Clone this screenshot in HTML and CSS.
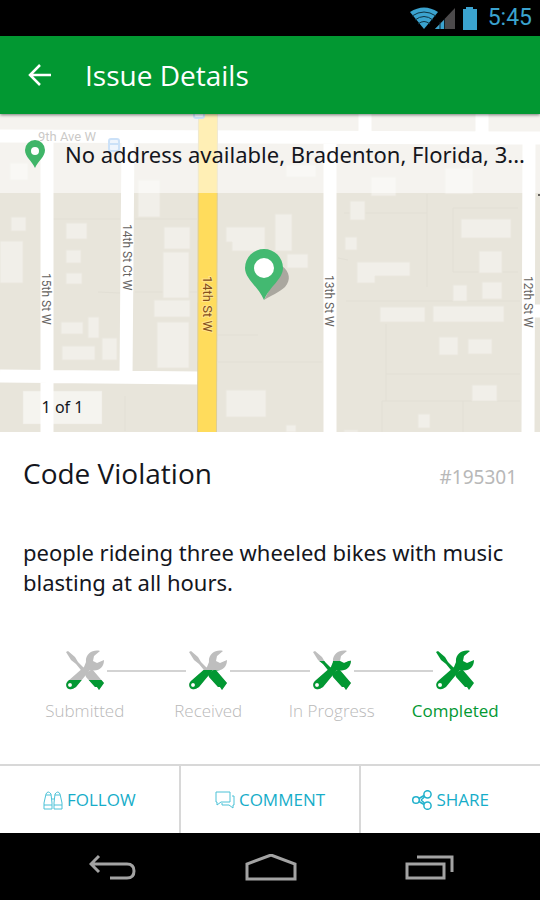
FILE: index.html
```
<!DOCTYPE html>
<html lang="en">
<head>
<meta charset="utf-8">
<meta name="viewport" content="width=device-width, initial-scale=1">
<title>Issue Details</title>
<link rel="stylesheet" href="styles.css">
</head>
<body>
<svg class="defs" width="0" height="0" aria-hidden="true">
  <defs>
    <g id="tools">
      <path d="M1 2 3 1 10 7 13 12 23 22 20 25 11 14 6 10Z"/>
      <path d="M20 24 27 19 39 33 34 40 32 37 30 37 21 27Z"/>
      <path d="M39 10 32 13 28 11 29 6 35 1C28-1 20 4 21 12L19 17 3 31C0 34 1 38 4 39 7 40 9 38 11 37L25 20C34 22 39 17 39 10ZM7 35A2 2 0 1 1 3 35 2 2 0 0 1 7 35Z" fill-rule="evenodd"/>
    </g>
    <clipPath id="fill-1"><rect y="30" width="40" height="11"/></clipPath>
    <clipPath id="fill-2"><rect y="20" width="40" height="21"/></clipPath>
    <clipPath id="fill-3"><rect y="11" width="40" height="30"/></clipPath>
  </defs>
</svg>
<div class="screen">
  <div class="status">
    <svg class="wifi" width="30" height="22" viewBox="0 0 30 22" aria-hidden="true">
      <path d="M1 5Q15-4 29 5L15 22Z" fill="#3ba3cf"/>
      <path d="M3 9Q15 1 27 9M6 13Q15 6 24 13M9 17Q15 12 21 17" fill="none" stroke="#0f3342" stroke-width="1"/>
    </svg>
    <svg class="signal" width="20" height="22" viewBox="0 0 20 22" aria-hidden="true">
      <path d="M0 22 20 1V22Z" fill="#4c4a4b"/>
      <path d="M0 22 9 13V22Z" fill="#3ba3cf"/>
      <path d="M5 15V22M9.500 12V22" stroke="#10252e"/>
    </svg>
    <svg class="battery" width="16" height="23" viewBox="0 0 16 23" aria-hidden="true">
      <path d="M1 2H4V0H11V2H15V23H1Z" fill="#3ba3cf"/>
    </svg>
    <span class="clock">5:45</span>
  </div>

  <header class="appbar">
    <button class="back" type="button" aria-label="Back">
      <svg width="24" height="24" viewBox="0 0 24 24"><path d="M23 12H2M12 2 2 12 12 22" fill="none" stroke="#fff" stroke-width="2.500"/></svg>
    </button>
    <h1>Issue Details</h1>
  </header>

  <section class="map" aria-label="Map">
    <svg class="tiles" viewBox="0 114 540 318" preserveAspectRatio="xMidYMid slice">
      <rect y="114" width="540" height="318" fill="#e8e5db"/>
      <g fill="none" stroke="#e2dfd5">
        <path d="M53 219H120M98 292 120 293M135 219H197M135 292H197M218 335H258M218 362H322M125 396V431M427 194V287M453 208H518M453 208V272M453 272H518M344 213H427M338 258 348 260M346 301H520M386 324V401M386 374H520M382 401H520M382 401V432M463 401V432"/>
      </g>
      <g fill="#f1efe9" stroke="#eae7de">
        <path d="M11 217H26V231H11ZM0 241H23V283H0ZM66 223H87V239H66ZM66 250H81V263H66ZM66 273H82V284H66ZM61 322H83V334H61ZM88 317H99V338H88ZM62 346H95V360H62ZM102 338H117V360H102Z"/>
        <path d="M138 180H160V217H138ZM164 227H190V249H164ZM163 252H189V298H163ZM154 300H190V317H154ZM157 322H189V368H157ZM23 391H102V424H23Z"/>
        <path d="M226 227H265V251H232V242H226ZM226 390H266V417H226ZM275 214H292V251H275ZM287 254H308V268H287ZM286 165H316V177H286ZM10 163H28V180H10Z"/>
        <path d="M350 201H365V220H350ZM345 237H357V250H345ZM357 262H410V276H375V283H357ZM461 219H511V238H461ZM479 251H502V273H479ZM482 282H502V299H482ZM453 285H467V301H453ZM380 307H425V322H380ZM433 306H504V322H433ZM439 337H458V355H439ZM468 339H492V354H468ZM472 385H497V401H472ZM418 414H430V428H418ZM286 425H296V432H286ZM371 177H396V196H371ZM445 168H473V194H445ZM344 430H358V432H344Z"/>
      </g>
      <path d="M0 136 540 138M365 114V136M482 114V136M47 135V432M128 140 126 378M0 376 200 378M330 138V432M529 138 528 432M528 311H540" fill="none" stroke="#fff" stroke-width="13"/>
      <path d="M208 114 207 432" stroke="#dccd97" stroke-width="20"/>
      <path d="M208 114 207 432" stroke="#ffdc5c" stroke-width="18"/>
      <path d="M538 195H540" stroke="#66635f" stroke-width="2"/>
      <g fill="#dbe9fb" stroke="#8dbcf0" stroke-width="2"><rect x="194" y="106" width="10" height="12" rx="2"/><rect x="109" y="139" width="10" height="12" rx="2"/><path d="M110 144H118"/></g>
      <text x="38" y="141" class="ave">9th Ave W</text>
      <g class="street">
        <text transform="translate(42 273) rotate(90)">15th St W</text>
        <text transform="translate(123 224) rotate(90)">14th St Ct W</text>
        <text class="main" transform="translate(203 276) rotate(90)">14th St W</text>
        <text transform="translate(325 275) rotate(90)">13th St W</text>
        <text transform="translate(524 276) rotate(90)">12th St W</text>
      </g>
      <path d="M264 300C270 296 280 292 285 287 291 280 290 272 282 266Z" fill="#aaa79f"/>
      <path d="M264 300C258 286 245 279 245 268A19 19 0 0 1 283 268C283 279 270 286 264 300Z" fill="#43b971"/>
      <circle cx="264" cy="268" r="10" fill="#fff"/>
    </svg>
    <div class="address">
      <svg width="22" height="28" viewBox="0 0 22 28" aria-hidden="true"><path d="M11 28C8 21 1 17 1 10A10 10 0 0 1 21 10C21 17 14 21 11 28Z" fill="#3fb568"/><circle cx="11" cy="11" r="4" fill="#fff"/></svg>
      <span>No address available, Bradenton, Florida, 3...</span>
    </div>
    <span class="count">1 of 1</span>
  </section>

  <main class="issue">
    <div class="heading">
      <h2>Code Violation</h2>
      <span class="number">#195301</span>
    </div>
    <p>people rideing three wheeled bikes with music blasting at all hours.</p>
    <ol class="steps">
      <li><div class="mark"><svg width="40" height="41" viewBox="0 0 40 41"><use href="#tools" class="off"/><use href="#tools" class="on" clip-path="url(#fill-1)"/></svg></div>Submitted</li>
      <li><div class="mark"><svg width="40" height="41" viewBox="0 0 40 41"><use href="#tools" class="off"/><use href="#tools" class="on" clip-path="url(#fill-2)"/></svg></div>Received</li>
      <li><div class="mark"><svg width="40" height="41" viewBox="0 0 40 41"><use href="#tools" class="off"/><use href="#tools" class="on" clip-path="url(#fill-3)"/></svg></div>In Progress</li>
      <li class="current"><div class="mark"><svg width="40" height="41" viewBox="0 0 40 41"><use href="#tools" class="on"/></svg></div>Completed</li>
    </ol>
  </main>

  <div class="actions">
    <button type="button"><svg width="20" height="20" viewBox="0 0 20 20"><path d="M1 19V13L3 4Q5 0 8 4L9 13V19ZM11 19V13L12 4Q15 0 17 4L19 13V19ZM1 15H9M11 15H19M3 5H8M12 5H17M9 9H11"/></svg>FOLLOW</button>
    <button type="button"><svg width="20" height="20" viewBox="0 0 20 20"><path d="M1 2H15V12H6L2 15V12H1ZM17 6H19V15H18V18L14 15H7V13"/></svg>COMMENT</button>
    <button type="button"><svg class="share" width="20" height="20" viewBox="0 0 20 20"><circle cx="4" cy="10" r="3.300"/><circle cx="15.500" cy="4.300" r="3.600"/><circle cx="15.500" cy="15.700" r="3.600"/><path d="M7 8.500 12 5.500M7 11.500 12 14.500M9 10 12.500 13M9 10 12.500 7"/></svg>SHARE</button>
  </div>

  <nav class="system">
    <button type="button" aria-label="Back"><svg width="48" height="28" viewBox="0 0 48 28"><path d="M10 2 2 10 10 18M2 10H38Q45 10 45 17T38 24H21"/></svg></button>
    <button type="button" aria-label="Home"><svg width="52" height="28" viewBox="0 0 52 28"><path d="M2 25V10L26 1 50 10V25Z"/></svg></button>
    <button type="button" aria-label="Recent apps"><svg width="50" height="28" viewBox="0 0 50 28"><path d="M2 10H39V24H2ZM12 3H47V18"/></svg></button>
  </nav>
</div>
</body>
</html>
```
FILE: styles.css
```
* {
  box-sizing: border-box;
}

body {
  margin: 0;
  background: #fff;
  color: #14161d;
  font-family: "Open Sans", "Noto Sans", sans-serif;
}

h1, h2, p, ol {
  margin: 0;
  padding: 0;
  font-weight: 400;
}

button {
  padding: 0;
  border: 0;
  background: none;
  font: inherit;
  cursor: pointer;
}

svg {
  display: block;
  flex: none;
}

.defs {
  position: absolute;
}

.screen {
  display: flex;
  flex-direction: column;
  min-height: 100vh;
}

.status {
  display: flex;
  align-items: center;
  justify-content: flex-end;
  height: 36px;
  padding-right: 8px;
  background: #000;
  color: #3ba3cf;
}

.battery {
  margin: 0 10px 0 7px;
}

.signal {
  margin-left: -4px;
}

.clock {
  font: 23px/36px Roboto, sans-serif;
}

.appbar {
  position: relative;
  z-index: 1;
  display: flex;
  align-items: center;
  gap: 33px;
  height: 78px;
  padding: 0 28px;
  background: #029832;
  box-shadow: 0 1px 3px rgba(0, 0, 0, 0.5);
  color: #fff;
}

h1 {
  font-size: 28px;
  line-height: 36px;
}

.map {
  position: relative;
}

.tiles {
  width: 100%;
}

.street {
  fill: #66635f;
  stroke: #fff;
  stroke-width: 2px;
  paint-order: stroke;
  font: 12px Roboto, sans-serif;
}

.street .main {
  fill: #86501c;
  stroke: #ffe48a;
  font-size: 13px;
}

.ave {
  fill: #8b8883;
  font: 13px Roboto, sans-serif;
}

.address {
  position: absolute;
  inset: 0 0 auto;
  display: flex;
  align-items: center;
  gap: 19px;
  height: 79px;
  padding-left: 24px;
  background: rgba(255, 255, 255, 0.55);
  font-family: "Noto Sans", sans-serif;
  font-size: 22px;
  line-height: 22px;
  white-space: nowrap;
}

.count {
  position: absolute;
  bottom: 8px;
  left: 23px;
  width: 79px;
  background: rgba(255, 255, 255, 0.3);
  font-family: "Noto Sans", sans-serif;
  font-size: 16px;
  line-height: 33px;
  text-align: center;
}

.issue {
  flex: 1;
  padding: 23px 23px 0;
}

.heading {
  display: flex;
  align-items: baseline;
  justify-content: space-between;
}

h2 {
  font-size: 28px;
  line-height: 36px;
}

.number {
  color: #b8b8b8;
  font-family: "Noto Sans", sans-serif;
  font-size: 19px;
}

.issue p {
  margin-top: 46px;
  font-family: "Noto Sans", sans-serif;
  font-size: 22px;
  line-height: 30px;
}

.steps {
  display: flex;
  margin-top: 53px;
  list-style: none;
}

.steps li {
  flex: 1;
  color: #b9b9b9;
  font-size: 17px;
  font-weight: 300;
  line-height: 24px;
  text-align: center;
  white-space: nowrap;
}

.steps .current {
  color: #029832;
  font-weight: 400;
}

.mark {
  display: flex;
  align-items: center;
  gap: 2px;
  margin-bottom: 8px;
}

.mark::before, .mark::after {
  content: "";
  flex: 1;
  height: 2px;
  background: #d3d3d3;
}

li:first-child .mark::before, li:last-child .mark::after {
  background: none;
}

.off {
  fill: #bebebe;
}

.on {
  fill: #029832;
}

.actions {
  display: flex;
  height: 69px;
  border-top: 2px solid #d8d8d8;
}

.actions button {
  display: flex;
  flex: 1;
  align-items: center;
  justify-content: center;
  gap: 4px;
  color: #16adc9;
  font-size: 17px;
}

.actions button + button {
  border-left: 2px solid #d8d8d8;
}

.actions path, .actions circle {
  fill: none;
  stroke: #4cc2d7;
  stroke-width: 1px;
}

.actions .share path, .actions .share circle {
  stroke: #22b1cc;
  stroke-width: 1.5px;
}

.system {
  display: flex;
  justify-content: center;
  gap: 108px;
  height: 67px;
  padding: 3px 0 0 3px;
  background: #000;
}

.system path {
  fill: none;
  stroke: #a3a3a3;
  stroke-width: 3px;
}
```
